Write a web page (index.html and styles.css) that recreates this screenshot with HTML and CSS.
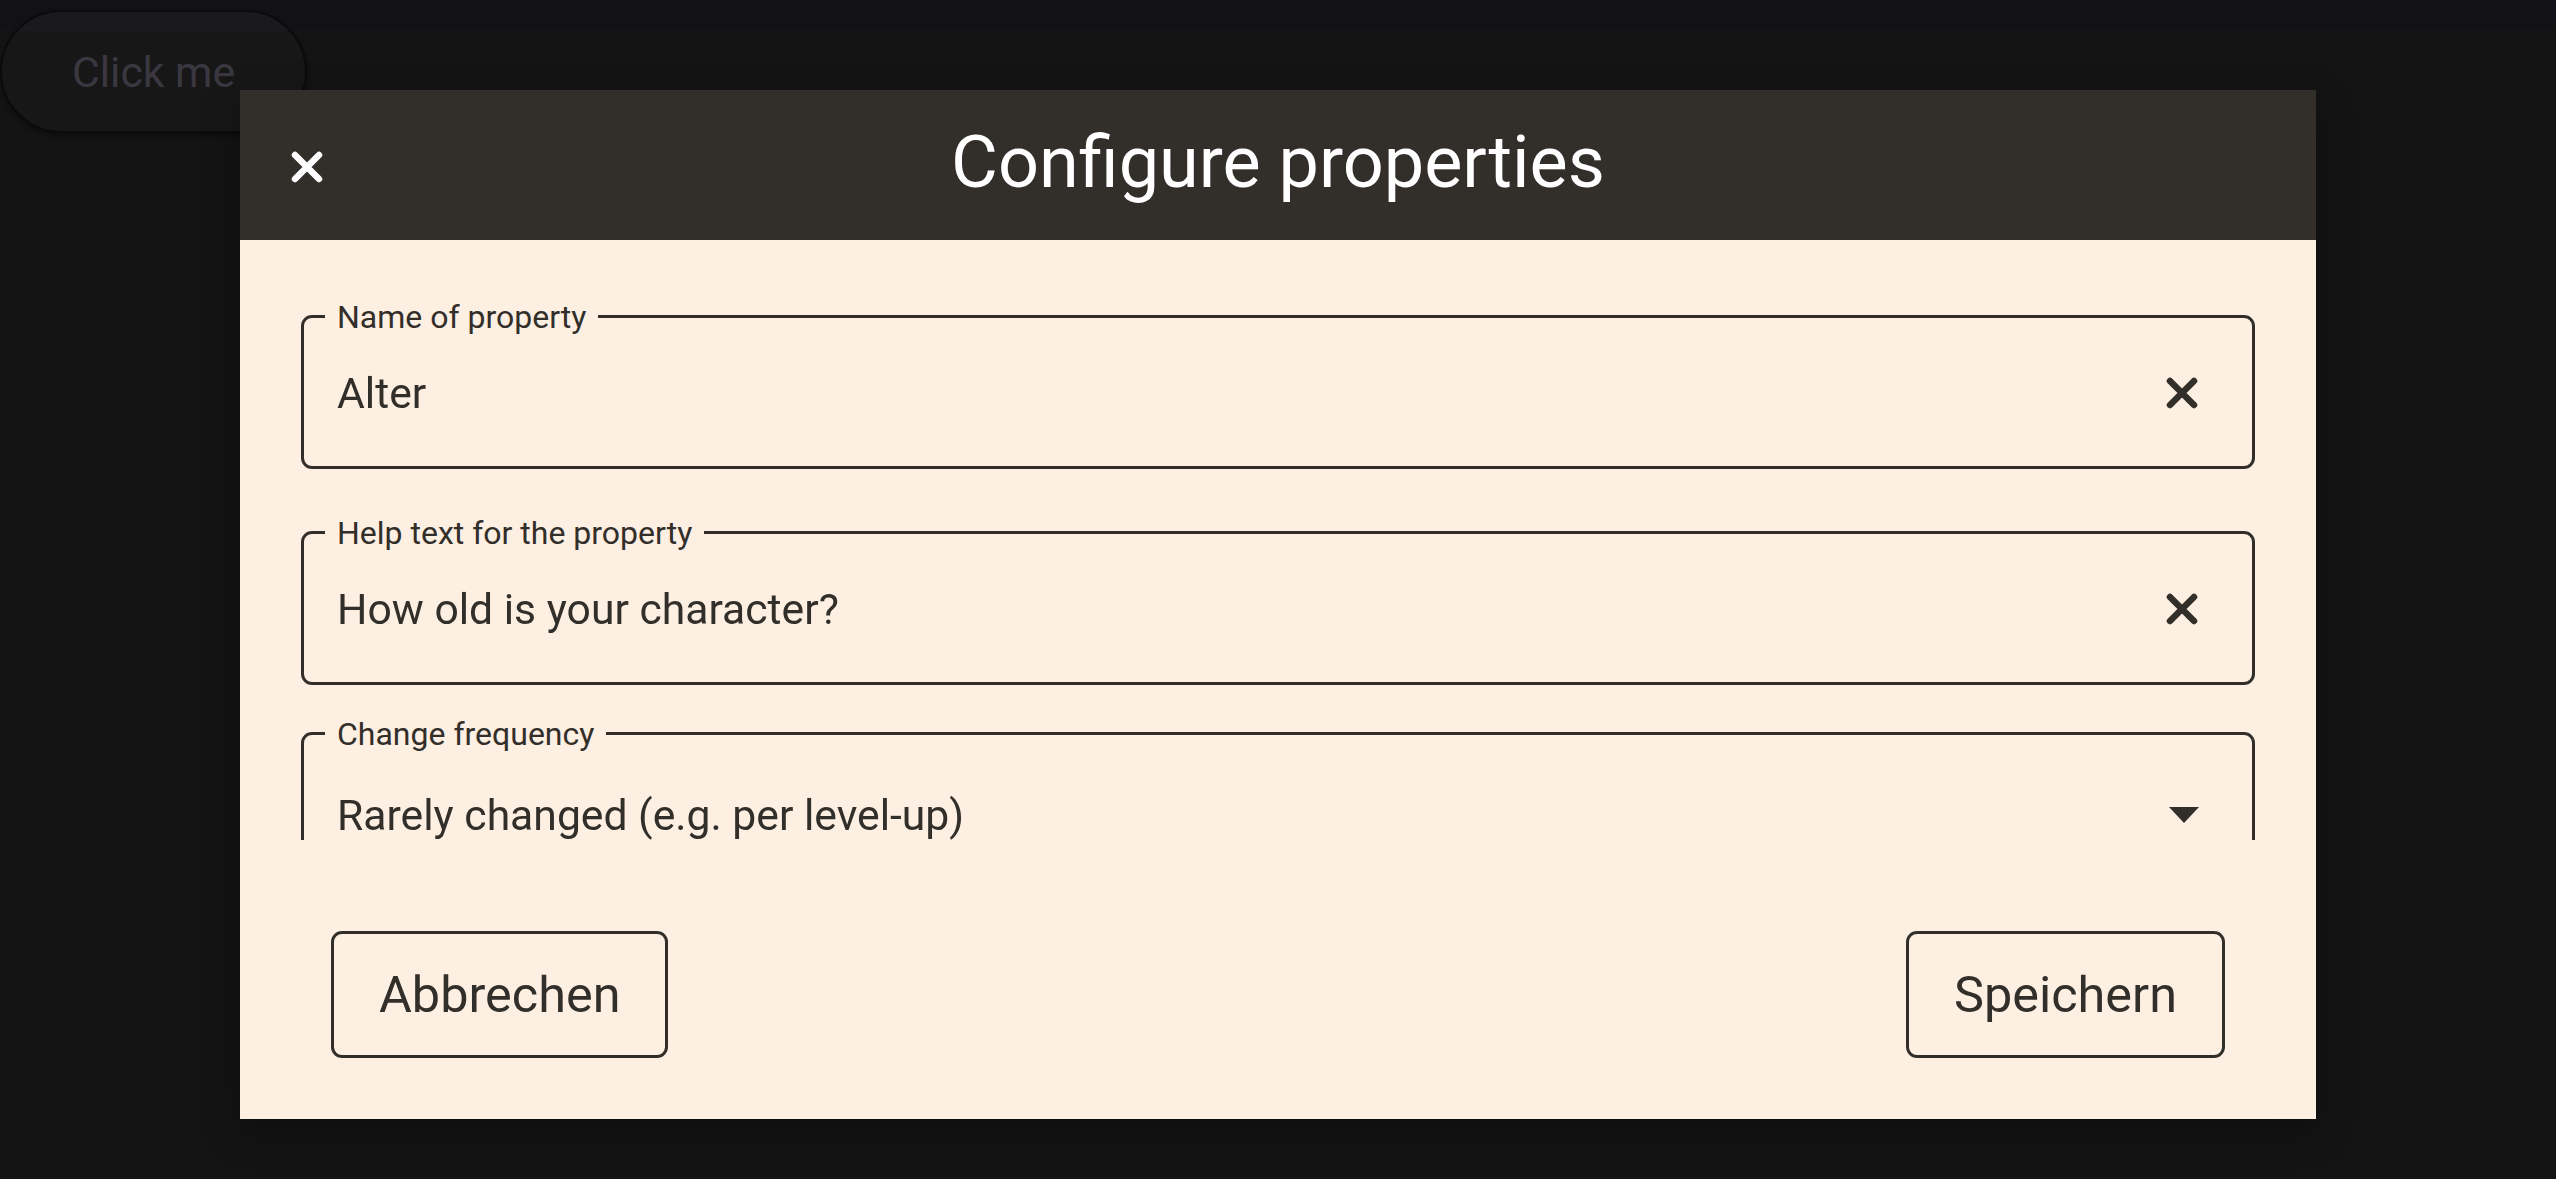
FILE: index.html
```html
<!DOCTYPE html>
<html lang="en">
<head>
<meta charset="utf-8">
<title>Configure properties</title>
<link rel="stylesheet" href="styles.css">
</head>
<body>
  <main class="page">
    <button class="pill-btn" type="button">Click me</button>
  </main>

  <div class="overlay">
    <section class="dialog" role="dialog" aria-labelledby="dlg-title">
      <header class="dlg-head">
        <button class="icon-btn close" type="button" aria-label="Close">
          <svg width="32" height="32" viewBox="0 0 32 32" aria-hidden="true">
            <path d="M4 4 L28 28 M28 4 L4 28" stroke="#ffffff" stroke-width="6.5" stroke-linecap="round" fill="none"/>
          </svg>
        </button>
        <h2 class="title" id="dlg-title">Configure properties</h2>
        <span class="head-spacer"></span>
      </header>

      <div class="dlg-body">
        <div class="field field-name">
          <span class="label">Name of property</span>
          <span class="value">Alter</span>
          <span class="adorn">
            <svg width="32" height="32" viewBox="0 0 32 32" aria-hidden="true">
              <path d="M4 4 L28 28 M28 4 L4 28" stroke="#322e2a" stroke-width="6.5" stroke-linecap="round" fill="none"/>
            </svg>
          </span>
        </div>

        <div class="field field-help">
          <span class="label">Help text for the property</span>
          <span class="value">How old is your character?</span>
          <span class="adorn">
            <svg width="32" height="32" viewBox="0 0 32 32" aria-hidden="true">
              <path d="M4 4 L28 28 M28 4 L4 28" stroke="#322e2a" stroke-width="6.5" stroke-linecap="round" fill="none"/>
            </svg>
          </span>
        </div>

        <div class="field field-select">
          <span class="label">Change frequency</span>
          <span class="value">Rarely changed (e.g. per level-up)</span>
          <span class="adorn">
            <svg width="32" height="18" viewBox="0 0 32 18" aria-hidden="true">
              <path d="M1 1 L31 1 L16 17 Z" fill="#322e2a"/>
            </svg>
          </span>
        </div>
      </div>

      <footer class="dlg-actions">
        <button class="btn" type="button">Abbrechen</button>
        <button class="btn" type="button">Speichern</button>
      </footer>
    </section>
  </div>
</body>
</html>
```

FILE: styles.css
```css
html, body {
  margin: 0;
  padding: 0;
}

body {
  width: 2556px;
  height: 1179px;
  overflow: hidden;
  background: linear-gradient(#121115 0, #121115 30px, #141414 30px, #141414 100%);
  font-family: Roboto, "Liberation Sans", Arial, sans-serif;
}

.page {
  padding-top: 10px;
}

.pill-btn {
  display: flex;
  align-items: center;
  justify-content: center;
  width: 307px;
  height: 123px;
  border: 2px solid #0b0b0c;
  border-radius: 62px;
  background: linear-gradient(#1a191e 0, #1a191e 19px, #171717 19px, #171717 100%);
  box-shadow: 0 3px 5px rgba(0, 0, 0, 0.35);
  color: #3a3741;
  font-family: Roboto, "Liberation Sans", Arial, sans-serif;
  font-size: 42.67px;
  padding: 0;
}

.overlay {
  position: fixed;
  inset: 0;
  display: flex;
  justify-content: center;
  align-items: flex-start;
  padding-top: 90px;
}

.dialog {
  width: 2076px;
  height: 1029px;
  display: flex;
  flex-direction: column;
  background: #fdefe2;
  box-shadow: 0 12px 36px rgba(0, 0, 0, 0.35);
  color: #322e2a;
}

.dlg-head {
  height: 150px;
  flex: none;
  background: #322e2a;
  display: grid;
  grid-template-columns: 1fr auto 1fr;
  align-items: center;
}

.icon-btn {
  border: 0;
  background: transparent;
  padding: 0;
  display: flex;
  align-items: center;
  justify-content: center;
}

.close {
  justify-self: start;
  width: 32px;
  height: 32px;
  margin-left: 51px;
  margin-top: 3px;
}

.title {
  margin: 0 0 5px 0;
  font-size: 72px;
  line-height: 84px;
  font-weight: 400;
  color: #ffffff;
  white-space: nowrap;
}

.dlg-body {
  height: 600px;
  flex: none;
  overflow: hidden;
  box-sizing: border-box;
  padding: 75px 61px 0 61px;
  display: flex;
  flex-direction: column;
}

.field {
  position: relative;
  flex: none;
  box-sizing: border-box;
  height: 154px;
  border: 3px solid #322e2a;
  border-radius: 11px;
  display: flex;
  align-items: center;
  padding: 1px 54px 0 33px;
}

.field-help {
  margin-top: 62px;
}

.field-select {
  margin-top: 47px;
  height: 164px;
}

.label {
  position: absolute;
  top: -20px;
  left: 21px;
  padding: 0 12px;
  background: #fdefe2;
  font-size: 32px;
  line-height: 38px;
  white-space: nowrap;
}

.value {
  flex: 1;
  font-size: 42.67px;
  line-height: 50px;
  white-space: nowrap;
}

.adorn {
  width: 32px;
  display: flex;
  align-items: center;
  justify-content: center;
}

.field-select .adorn {
  margin-right: -2px;
}

.dlg-actions {
  flex: 1;
  display: flex;
  justify-content: space-between;
  align-items: flex-start;
  padding: 91px 91px 0 91px;
}

.btn {
  box-sizing: border-box;
  height: 127px;
  padding: 0 45px;
  border: 3px solid #322e2a;
  border-radius: 11px;
  background: transparent;
  color: #322e2a;
  font-family: Roboto, "Liberation Sans", Arial, sans-serif;
  font-size: 50.4px;
  font-weight: 400;
  line-height: 60px;
}
```
